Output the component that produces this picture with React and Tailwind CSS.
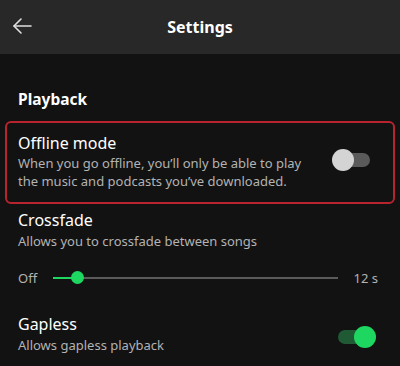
import React from 'react';

const Toggle = ({ on }) => (
    <div className="relative w-[36px] h-[24px] flex items-center">
        <div className={`w-full h-[14px] rounded-full ${on ? 'bg-[#1f5a35]' : 'bg-[#5a5a5a]'}`} />
        <div
            className={`absolute top-[1px] w-[22px] h-[22px] rounded-full ${on ? 'right-[-2px] bg-[#1ed760]' : 'left-[-2px] bg-[#d4d4d4]'}`}
        />
    </div>
);

const App = () => {
    return (
        <div className="w-[400px] h-[366px] bg-[#121212] text-white overflow-hidden" style={{ fontFamily: '"Noto Sans", Lato, sans-serif' }}>
            <div className="h-[54px] bg-[#282828] flex items-center relative">
                <svg className="absolute left-[12px] top-[17px]" width="20" height="18" viewBox="0 0 20 18" fill="none" stroke="#e0e0e0" strokeWidth="1.6" strokeLinecap="round" strokeLinejoin="round">
                    <path d="M19 9H2" />
                    <path d="M9 2L2 9l7 7" />
                </svg>
                <div className="w-full text-center text-[16px] font-bold">Settings</div>
            </div>

            <div className="px-[18px] pt-[34px] text-[15.5px] font-bold">Playback</div>

            <div className="mx-[5px] mt-[10px] border-2 border-[#b8242e] rounded-[6px] h-[83px] pl-[11px] pr-[23px] flex items-center justify-between">
                <div className="pb-[4px]">
                    <div className="text-[16px] leading-[22px]">Offline mode</div>
                    <div className="text-[13px] leading-[18px] text-[#b3b3b3]">
                        When you go offline, you’ll only be able to play
                        <br />
                        the music and podcasts you’ve downloaded.
                    </div>
                </div>
                <div className="pb-[5px]">
                    <Toggle on={false} />
                </div>
            </div>

            <div className="px-[18px] pt-[5px]">
                <div className="text-[16px] leading-[22px]">Crossfade</div>
                <div className="text-[13px] leading-[20px] text-[#b3b3b3]">Allows you to crossfade between songs</div>
            </div>

            <div className="px-[18px] mt-[17px] flex items-center h-[20px]">
                <span className="text-[13px] text-[#b3b3b3] w-[35px]">Off</span>
                <div className="relative flex-1 h-[2px] bg-[#5a5a5a]">
                    <div className="absolute left-0 top-0 h-[2px] w-[24px] bg-[#1ed760]" />
                    <div className="absolute left-[18px] top-[-6px] w-[13px] h-[13px] rounded-full bg-[#1ed760]" />
                </div>
                <span className="text-[13px] text-[#b3b3b3] pl-[16px] pr-[4px]">12 s</span>
            </div>

            <div className="px-[18px] pr-[26px] mt-[25px] flex items-center justify-between">
                <div>
                    <div className="text-[16px] leading-[22px]">Gapless</div>
                    <div className="text-[13px] leading-[21px] text-[#b3b3b3]">Allows gapless playback</div>
                </div>
                <div className="mt-[4px]">
                    <Toggle on={true} />
                </div>
            </div>
        </div>
    );
};

export default App;
